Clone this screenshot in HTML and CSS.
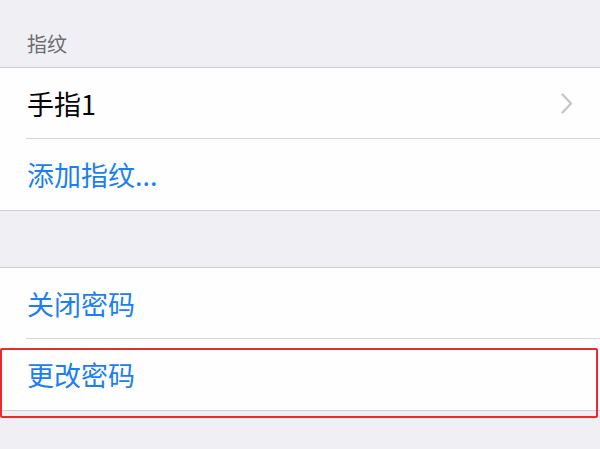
FILE: index.html
```html
<!DOCTYPE html>
<html lang="zh-CN">
<head>
<meta charset="utf-8">
<link rel="stylesheet" href="styles.css">
</head>
<body>
<div class="page">
  <div class="section-header">指纹</div>
  <div class="group">
    <div class="row">
      <span class="label">手指1</span>
      <svg class="chevron" width="12" height="21" viewBox="0 0 12 21"><path d="M1.5 1.5 L10 10.5 L1.5 19.5" fill="none" stroke="#c4c4c9" stroke-width="2.2" stroke-linecap="round" stroke-linejoin="round"/></svg>
    </div>
    <div class="sep"></div>
    <div class="row row-last">
      <span class="label link">添加指纹...</span>
    </div>
  </div>
  <div class="spacer"></div>
  <div class="group">
    <div class="row">
      <span class="label link">关闭密码</span>
    </div>
    <div class="sep"></div>
    <div class="row row-last">
      <span class="label link">更改密码</span>
      <div class="highlight-box"></div>
    </div>
  </div>
</div>
</body>
</html>
```

FILE: styles.css
```css
html, body {
  margin: 0;
  padding: 0;
  background: #efeff4;
}
body {
  width: 600px;
  height: 449px;
  overflow: hidden;
  font-family: "Noto Sans CJK SC", "Noto Sans", sans-serif;
}
.page {
  display: flex;
  flex-direction: column;
}
.section-header {
  height: 67px;
  box-sizing: border-box;
  padding: 31px 27px 10px;
  font-size: 20px;
  line-height: 26px;
  color: #6d6d72;
}
.group {
  background: #fefefe;
  border-top: 1px solid #cfcfd4;
  border-bottom: 1px solid #cfcfd4;
  display: flex;
  flex-direction: column;
}
.row {
  height: 70px;
  display: flex;
  align-items: center;
  padding: 0 27px;
  position: relative;
}
.row-last {
  height: 71px;
}
.sep {
  height: 1px;
  margin-left: 26px;
  background: #d6d6da;
}
.label {
  font-size: 27px;
  line-height: 1;
  color: #050505;
  flex: 1;
}
.link {
  color: #1b7ef2;
}
.chevron {
  display: block;
}
.spacer {
  height: 56px;
}
.highlight-box {
  position: absolute;
  left: 0;
  right: 2px;
  top: 9px;
  height: 70px;
  box-sizing: border-box;
  border: 2px solid #ea2a2e;
  border-radius: 2px;
}
```
